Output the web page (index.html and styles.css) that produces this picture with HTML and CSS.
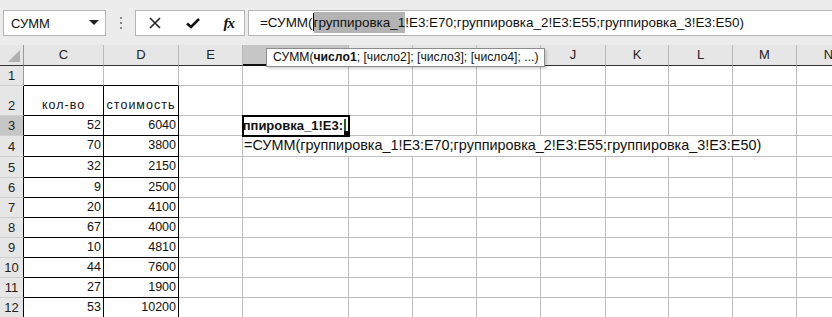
FILE: index.html
```html
<!DOCTYPE html>
<html lang="ru">
<head>
    <meta charset="UTF-8">
    <title>СУММ</title>
    <link rel="stylesheet" href="styles.css">
</head>
<body>
    <div class="toolbar">
        <div class="namebox">
            <span>СУММ</span>
            <svg class="drop" width="10" height="6" viewBox="0 0 10 6"><path d="M0 0H10L5 5Z" fill="#222"/></svg>
        </div>
        <div class="grip"><i></i><i></i><i></i></div>
        <div class="fx-buttons">
            <svg width="14" height="14" viewBox="0 0 14 14"><path d="M2 2L12 12M12 2L2 12" stroke="#222" stroke-width="1.6"/></svg>
            <svg width="16" height="14" viewBox="0 0 16 14"><path d="M2 7.5L6 11L14 3" stroke="#111" stroke-width="2.6" fill="none"/></svg>
            <span class="fx">fx</span>
        </div>
        <div class="formula">=СУММ(<span class="caret"></span><span class="picked">группировка_1</span>!E3:E70;группировка_2!E3:E55;группировка_3!E3:E50)</div>
    </div>

    <div class="sheet" id="sheet"></div>

    <!-- Function hint -->
    <div class="hint">СУММ(<b>число1</b>; [число2]; [число3]; [число4]; ...)</div>

    <script>
        const cols = ['C', 'D', 'E', 'F', 'G', 'H', 'I', 'J', 'K', 'L', 'M', 'N'];
        const qty = [52, 70, 32, 9, 20, 67, 10, 44, 27, 53];
        const cost = [6040, 3800, 2150, 2500, 4100, 4000, 4810, 7600, 1900, 10200];
        const formula = '=СУММ(группировка_1!E3:E70;группировка_2!E3:E55;группировка_3!E3:E50)';

        const sheet = document.getElementById('sheet');

        function addCell(className, html) {
            const cell = document.createElement('div');
            cell.className = className;
            if (html !== undefined) cell.innerHTML = html;
            sheet.appendChild(cell);
            return cell;
        }

        // header row
        addCell('corner', '<span class="tri"></span>');
        cols.forEach(c => addCell(c === 'F' ? 'head active' : 'head', c));

        for (let r = 1; r <= 12; r++) {
            let rh = 'rowhead';
            if (r >= 2) rh += ' edge';
            if (r === 3) rh += ' active';
            addCell(rh, r);

            cols.forEach((c, i) => {
                let cls = 'cell';
                let html = '';
                if (i < 2) {
                    if (r === 1) cls += ' above';
                    if (r >= 2) cls += ' boxed';
                    if (r === 2) {
                        cls += ' label';
                        html = i === 0 ? 'кол-во' : 'стоимость';
                    }
                    if (r >= 3) {
                        cls += ' num';
                        html = i === 0 ? qty[r - 3] : cost[r - 3];
                    }
                }
                if (r === 3 && c === 'F') {
                    cls += ' editing';
                    html = '<span>=СУММ(группировка_1!E3:</span><i class="cursor"></i>';
                }
                if (r === 4 && i >= 3 && i <= 9) cls += ' spill';
                if (r === 4 && c === 'F') {
                    html = '<span class="overflow">' + formula + '</span>';
                }
                addCell(cls, html);
            });
        }
    </script>
</body>
</html>
```

FILE: styles.css
```css
* {
    box-sizing: border-box;
    margin: 0;
    padding: 0;
}

body {
    width: 832px;
    height: 317px;
    overflow: hidden;
    background: #fff;
    font-family: 'Liberation Sans', Arial, sans-serif;
    color: #111;
    position: relative;
}

/* toolbar */

.toolbar {
    height: 45px;
    background: #ececec;
    display: flex;
    align-items: flex-start;
    padding-top: 10px;
    padding-left: 3px;
}

.namebox {
    width: 103px;
    height: 26px;
    background: #fff;
    border: 1px solid #b4b4b4;
    display: flex;
    align-items: center;
    justify-content: space-between;
    padding: 0 6px 0 7px;
    font-size: 13px;
}

.grip {
    width: 29px;
    height: 26px;
    display: flex;
    flex-direction: column;
    align-items: center;
    justify-content: center;
    gap: 3px;
}

.grip i {
    width: 2px;
    height: 2px;
    background: #8a8a8a;
}

.fx-buttons {
    width: 110px;
    height: 26px;
    background: #fff;
    border: 1px solid #b4b4b4;
    display: flex;
    align-items: center;
    justify-content: space-between;
    padding: 0 10px 0 12px;
}

.fx {
    font-family: 'Liberation Serif', serif;
    font-style: italic;
    font-weight: bold;
    font-size: 15px;
    letter-spacing: -1px;
}

.formula {
    flex: 1;
    margin-left: 3px;
    height: 26px;
    background: #fff;
    border: 1px solid #b4b4b4;
    border-right: none;
    padding-left: 11px;
    font-size: 13.45px;
    line-height: 24px;
    white-space: nowrap;
    overflow: hidden;
}

.caret {
    display: inline-block;
    width: 1px;
    height: 18px;
    background: #000;
    vertical-align: -4px;
}

.picked {
    background: #b3b3b3;
    padding: 3px 0;
}

/* sheet */

.sheet {
    display: grid;
    grid-template-columns: 24px 80px 75px 64px 106px 64px 64px 64px 65px 63px 64px 64px 64px;
    grid-template-rows: 21px 20px 30px 20px 21px 21px repeat(7, 20px);
}

.corner,
.head {
    background: #e6e6e6;
    border-right: 1px solid #b8b8b8;
    border-bottom: 1px solid #333;
    font-size: 13px;
    text-align: center;
    line-height: 20px;
    color: #222;
}

.corner {
    position: relative;
    border-right-color: #999;
}

.tri {
    position: absolute;
    right: 3px;
    bottom: 3px;
    width: 0;
    height: 0;
    border-left: 12px solid transparent;
    border-bottom: 12px solid #b0b0b0;
}

.head.active {
    background: #c6c6c6;
    border-bottom: 2px solid #111;
}

.rowhead {
    background: #e6e6e6;
    border-right: 1px solid #999;
    border-bottom: 1px solid #cfcfcf;
    font-size: 13px;
    display: flex;
    align-items: flex-end;
    justify-content: center;
    padding-bottom: 2px;
    color: #222;
}

.rowhead.edge {
    border-right-color: #000;
}

.rowhead.active {
    background: #c6c6c6;
}

.cell {
    border-right: 1px solid #bdbdbd;
    border-bottom: 1px solid #bdbdbd;
    font-size: 12.5px;
    white-space: nowrap;
}

.cell.above {
    border-bottom-color: #000;
}

.cell.boxed {
    border-right-color: #000;
    border-bottom-color: #000;
}

.label {
    display: flex;
    align-items: flex-end;
    justify-content: center;
    padding-bottom: 3px;
    letter-spacing: 1px;
}

.num {
    text-align: right;
    padding-right: 2px;
    line-height: 19px;
}

.spill {
    border-right: none;
}

.overflow {
    display: block;
    padding-left: 1px;
    font-size: 14.4px;
    line-height: 19px;
    position: relative;
}

.editing {
    position: relative;
    z-index: 1;
    outline: 2px solid #000;
    outline-offset: -1px;
    display: flex;
    justify-content: flex-end;
    align-items: center;
    overflow: hidden;
    font-weight: bold;
    font-size: 13px;
    padding-right: 2px;
}

.editing .cursor {
    flex: none;
    width: 2px;
    height: 13px;
    background: #1e5f2e;
    margin-left: 1px;
}

.editing::after {
    content: '';
    position: absolute;
    right: 0;
    bottom: 0;
    width: 4px;
    height: 4px;
    background: #000;
}

/* function hint over the headers */

.hint {
    position: absolute;
    left: 266px;
    top: 48px;
    height: 19px;
    padding: 0 6px;
    background: #fff;
    border: 1px solid #8c8c8c;
    box-shadow: 2px 2px 2px rgba(0, 0, 0, 0.15);
    font-size: 12.2px;
    line-height: 17px;
    white-space: nowrap;
    color: #111;
}
```
